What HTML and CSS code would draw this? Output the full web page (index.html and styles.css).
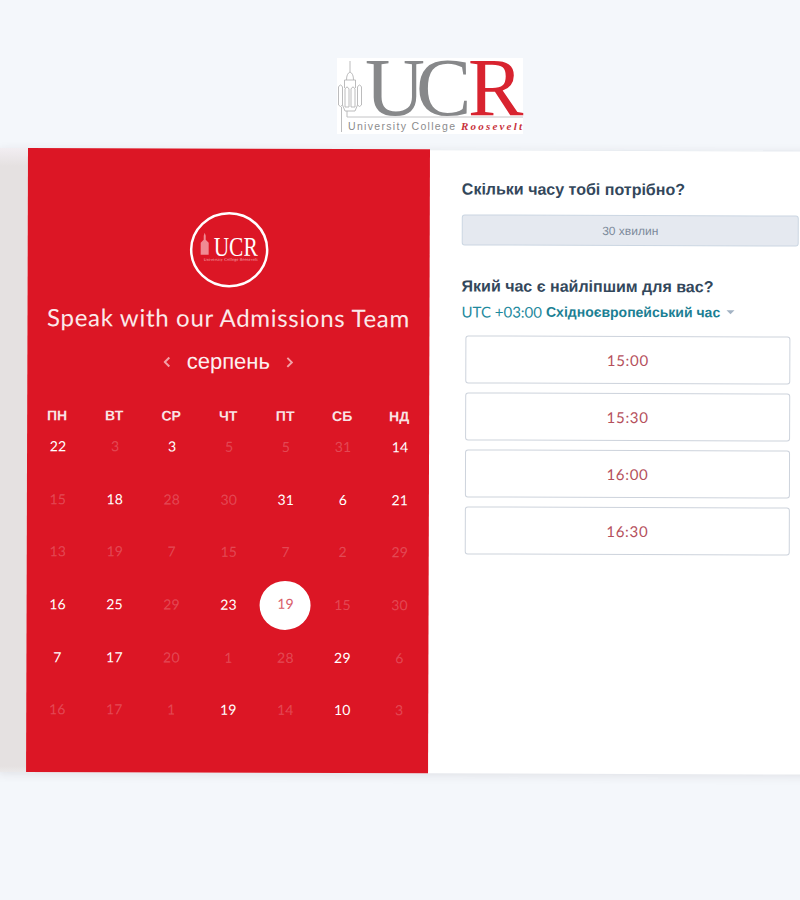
FILE: index.html
```html
<!DOCTYPE html>
<html lang="uk">
<head>
<meta charset="utf-8">
<title>Speak with our Admissions Team</title>
<link rel="stylesheet" href="styles.css">
</head>
<body>
<header class="brand">
  <svg class="brand-logo" width="186" height="76" viewBox="0 0 186 76">
    <rect width="186" height="76" fill="#fff"/>
    <g fill="none" stroke="#b4b4b6" stroke-width="0.9">
      <path d="M13 3V14M9.500 22Q9.500 15.500 13 14Q16.500 15.500 16.500 22M7.500 22H18.500M7.500 22V30M18.500 22V30"/>
      <path d="M1.500 29Q3.500 25 5.500 29V47Q3.500 50 1.500 47ZM20.500 29Q22.500 25 24.500 29V47Q22.500 50 20.500 47Z"/>
      <path d="M8 31Q10 27 12 31V49H8ZM14 31Q16 27 18 31V49H14ZM5.500 47L8 53H18L20.500 47"/>
      <path d="M4.500 49V74M10 53V59"/>
      <path d="M10 59H186" stroke="#bdbdbf"/>
    </g>
    <text class="logo-mark logo-grey" x="28" y="57">U</text>
    <text class="logo-mark logo-grey" x="79" y="57">C</text>
    <text class="logo-mark logo-red" x="131" y="57">R</text>
    <text class="logo-line" x="11" y="72" textLength="107">University College</text>
    <text class="logo-script" x="124" y="72" textLength="61">Roosevelt</text>
  </svg>
</header>
<main class="card">
  <div class="strip"></div>
  <section class="calendar">
    <svg class="seal" width="79" height="76" viewBox="0 0 79 76">
      <ellipse cx="39.500" cy="38" rx="38" ry="36.500" fill="none" stroke="#fff" stroke-width="2.500"/>
      <path d="M11 43V31L14 28V24L15 21L16 24V28L19 31V43Z" fill="#f08b93"/>
      <text class="seal-mark" x="24" y="44" textLength="44" lengthAdjust="spacingAndGlyphs">UCR</text>
      <text class="seal-line" x="14" y="49" textLength="54">University College Roosevelt</text>
    </svg>
    <h1 class="title">Speak with our Admissions Team</h1>
    <div class="month">
      <svg class="chev" width="7" height="11" viewBox="0 0 7 11"><path d="M6 1L1.500 5.500L6 10" fill="none" stroke="#f2a0a6" stroke-width="2"/></svg>
      <span class="month-name">серпень</span>
      <svg class="chev" width="7" height="11" viewBox="0 0 7 11"><path d="M1 1L5.500 5.500L1 10" fill="none" stroke="#f2a0a6" stroke-width="2"/></svg>
    </div>
    <div class="weekdays">
      <span>ПН</span><span>ВТ</span><span>СР</span><span>ЧТ</span><span>ПТ</span><span>СБ</span><span>НД</span>
    </div>
    <div class="days">
      <span class="day on">22</span><span class="day">3</span><span class="day on">3</span><span class="day">5</span><span class="day">5</span><span class="day">31</span><span class="day on">14</span>
      <span class="day">15</span><span class="day on">18</span><span class="day">28</span><span class="day">30</span><span class="day on">31</span><span class="day on">6</span><span class="day on">21</span>
      <span class="day">13</span><span class="day">19</span><span class="day">7</span><span class="day">15</span><span class="day">7</span><span class="day">2</span><span class="day">29</span>
      <span class="day on">16</span><span class="day on">25</span><span class="day">29</span><span class="day on">23</span><span class="day"><b class="selected">19</b></span><span class="day">15</span><span class="day">30</span>
      <span class="day on">7</span><span class="day on">17</span><span class="day">20</span><span class="day">1</span><span class="day">28</span><span class="day on">29</span><span class="day">6</span>
      <span class="day">16</span><span class="day">17</span><span class="day">1</span><span class="day on">19</span><span class="day">14</span><span class="day on">10</span><span class="day">3</span>
    </div>
  </section>
  <section class="picker">
    <h2 class="question">Скільки часу тобі потрібно?</h2>
    <div class="duration">30 хвилин</div>
    <h2 class="question second">Який час є найліпшим для вас?</h2>
    <div class="zone"><span>UTC +03:00</span> <strong>Східноєвропейський час</strong><i class="caret"></i></div>
    <div class="slots">
      <button class="slot">15:00</button>
      <button class="slot">15:30</button>
      <button class="slot">16:00</button>
      <button class="slot">16:30</button>
    </div>
  </section>
</main>
</body>
</html>
```
FILE: styles.css
```css
* { box-sizing: border-box; }
html, body { height: 900px; overflow: hidden; }
body {
  margin: 0;
  background: #f4f7fb;
  font-family: "Liberation Sans", Arial, sans-serif;
}
.brand { display: flex; justify-content: center; height: 148px; padding: 58px 0 14px 60px; }
.brand-logo { display: block; overflow: visible; }
.logo-mark { font: 83px "Liberation Serif", serif; }
.logo-grey { fill: #87888a; }
.logo-red { fill: #d8232f; }
.logo-line { font: 10.500px "Liberation Sans", sans-serif; fill: #8b8b8d; }
.logo-script { font: italic bold 11px "Liberation Serif", serif; fill: #c8323c; }

.card {
  display: flex;
  width: 812px;
  height: 624px;
  background: #fff;
  box-shadow: 0 2px 10px rgba(60, 40, 50, .1);
  transform: rotate(.18deg);
  transform-origin: 0 0;
}
.strip {
  flex: 0 0 28px;
  background: linear-gradient(#f2eef2, #e5e1e1 18px, #e5e1e1 calc(100% - 6px), #ebe9ea);
}
.calendar {
  flex: 0 0 402px;
  display: flex;
  flex-direction: column;
  align-items: center;
  padding-top: 63px;
  background: #dc1625;
  color: #fff;
}
.seal { display: block; overflow: visible; }
.seal-mark { font: 27px "Liberation Serif", serif; fill: #fff; }
.seal-line { font: 4px "Liberation Serif", serif; fill: #f8c4c8; }
.title {
  margin: 14px 0 0;
  font: 400 24px/32px Lato, sans-serif;
  letter-spacing: .7px;
  color: #fbe9ea;
  white-space: nowrap;
}
.month { display: flex; align-items: center; gap: 16px; margin-top: 14px; height: 28px; }
.month-name { font-size: 22px; line-height: 28px; color: #fdf0f1; }
.chev { display: block; }
.weekdays, .days {
  display: grid;
  grid-template-columns: repeat(7, 57px);
  justify-items: center;
  text-align: center;
}
.weekdays { margin-top: 30px; font-size: 14px; line-height: 20px; font-weight: 700; color: #f9e4e5; }
.days { margin: 10px 0 0 2px; grid-auto-rows: 52.700px; }
.day {
  display: flex;
  align-items: center;
  justify-content: center;
  align-self: start;
  height: 22px;
  font: 14px/22px Lato, sans-serif;
  letter-spacing: .2px;
  color: rgba(255, 255, 255, .22);
}
.day.on { color: #fff; }
.selected {
  display: flex;
  flex: none;
  align-items: center;
  justify-content: center;
  width: 51px;
  height: 49px;
  margin-left: -2px;
  padding: 0 0 3px 2px;
  border-radius: 50%;
  background: #fff;
  color: #d9606b;
  font-weight: 400;
}

.picker { flex: 1; padding: 28px 0 0 32px; border-top: 1px solid #e8ecf1; }
.question {
  margin: 0;
  font: 700 16px/22px "Liberation Sans", sans-serif;
  color: #33475b;
  white-space: nowrap;
}
.duration {
  display: flex;
  align-items: center;
  justify-content: center;
  width: 337px;
  height: 31px;
  margin-top: 14px;
  border: 1px solid #cbd6e2;
  border-radius: 3px;
  background: #e5e9f0;
  font-size: 12px;
  color: #7c8a9b;
}
.second { margin-top: 30px; }
.zone {
  display: flex;
  align-items: center;
  gap: 4px;
  height: 20px;
  margin-top: 4px;
  font: 15px/20px Lato, sans-serif;
  color: #1f8a9e;
  white-space: nowrap;
}
.zone strong { font: 700 14px/20px "Liberation Sans", sans-serif; color: #1b7f94; }
.caret {
  width: 0;
  height: 0;
  margin-left: 2px;
  border-style: solid;
  border-width: 4px 4.500px 0;
  border-color: #a3b3c4 transparent transparent;
}
.slots { display: flex; flex-direction: column; gap: 9px; width: 325px; margin: 14px 0 0 4px; }
.slot {
  height: 48px;
  padding: 0;
  border: 1px solid #cdd3dc;
  border-radius: 3px;
  background: #fff;
  font: 15px Lato, sans-serif;
  letter-spacing: .7px;
  color: #b5505c;
}
```
